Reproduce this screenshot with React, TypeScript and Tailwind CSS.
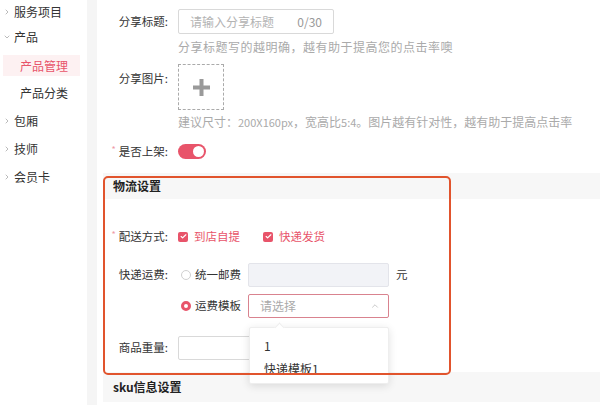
import { ChevronRight, ChevronDown, ChevronUp, Check } from "lucide-react"

const font = { fontFamily: '"Noto Sans CJK SC", "Noto Sans", sans-serif' }

type NavItem = { label: string; open?: boolean; h: string; children?: { label: string; active?: boolean }[] }

const nav: NavItem[] = [
  { label: "服务项目", h: "h-[24px]" },
  {
    label: "产品",
    open: true,
    h: "h-[26px]",
    children: [{ label: "产品管理", active: true }, { label: "产品分类" }],
  },
  { label: "包厢", h: "h-[28px]" },
  { label: "技师", h: "h-[28px]" },
  { label: "会员卡", h: "h-[28px]" },
]

// 左侧菜单
function Sidebar() {
  return (
    <aside className="w-[87px] shrink-0 bg-white">
      {nav.map((n) => (
        <div key={n.label}>
          <div className={`flex items-center ${n.h} text-[12px] text-[#333]`}>
            {n.open ? (
              <ChevronDown className="w-[8px] h-[8px] ml-[3px] mr-[3px] text-[#999]" strokeWidth={2} />
            ) : (
              <ChevronRight className="w-[8px] h-[8px] ml-[3px] mr-[3px] text-[#999]" strokeWidth={2} />
            )}
            {n.label}
          </div>
          {n.children && (
            <div className="mt-[5px] mb-[4px] flex flex-col gap-[6px]">
              {n.children.map((c) => (
                <div
                  key={c.label}
                  className={`flex items-center h-[21px] ml-[3px] mr-[7px] pl-[17px] text-[12px] ${
                    c.active ? "bg-[#fdf1f2] text-[#e8546a]" : "text-[#333]"
                  }`}
                >
                  {c.label}
                </div>
              ))}
            </div>
          )}
        </div>
      ))}
    </aside>
  )
}

function Label({ text, required }: { text: string; required?: boolean }) {
  return (
    <div className="w-[73px] shrink-0 text-right text-[11.5px] text-[#333] pr-[2px] whitespace-nowrap">
      {required && <span className="text-[#ee9aa6] text-[9px] mr-[3px] align-top">*</span>}
      {text}
    </div>
  )
}

function CheckBox({ label }: { label: string }) {
  return (
    <label className="flex items-center text-[11.5px] text-[#e8546a] mr-[15px]">
      <span className="w-[10px] h-[10px] rounded-[2px] bg-[#e8546a] flex items-center justify-center mr-[6px]">
        <Check className="w-[7px] h-[7px] text-white" strokeWidth={4} />
      </span>
      {label}
    </label>
  )
}

export default function App() {
  return (
    <div className="relative w-[600px] h-[405px] overflow-hidden flex bg-[#f5f5f5]" style={font}>
      <Sidebar />
      <div className="w-[10px] shrink-0 bg-[#f5f5f5]" />
      <main className="flex-1 bg-white">
        {/* 分享标题 */}
        <div className="flex items-center mt-[9px] gap-[8px]">
          <Label text="分享标题:" />
          <div className="w-[156px] h-[25px] border border-[#d9d9d9] rounded-[2px] flex items-center justify-between px-[11px] text-[12px] text-[#b3b3b3]">
            <span>请输入分享标题</span>
            <span className="text-[#999]">0/30</span>
          </div>
        </div>
        <p className="ml-[81px] mt-[5px] text-[12px] text-[#aaa] leading-[16px] tracking-[0.5px]">
          分享标题写的越明确，越有助于提高您的点击率噢
        </p>

        {/* 分享图片 */}
        <div className="flex items-start mt-[9px] gap-[8px]">
          <div className="pt-[6px]">
            <Label text="分享图片:" />
          </div>
          <div className="w-[46px] h-[46px] border border-dashed border-[#aaa] flex items-center justify-center">
            <svg width="17" height="17" viewBox="0 0 17 17">
              <rect x="6.5" y="0" width="4" height="17" fill="#9a9a9a" />
              <rect x="0" y="6.5" width="17" height="4" fill="#9a9a9a" />
            </svg>
          </div>
        </div>
        <p className="ml-[81px] mt-[4px] text-[12px] text-[#aaa] leading-[16px] whitespace-nowrap">
          建议尺寸：<span className="text-[11px]">200X160px</span>，宽高比<span className="text-[11px]">5:4</span>。图片越有针对性，越有助于提高点击率
        </p>

        {/* 是否上架 */}
        <div className="flex items-center mt-[13px] gap-[8px]">
          <Label text="是否上架:" required />
          <div className="w-[28px] h-[15px] rounded-full bg-[#e8546a] relative">
            <span className="absolute right-[2px] top-[2px] w-[11px] h-[11px] rounded-full bg-white" />
          </div>
        </div>

        {/* 物流设置 */}
        <div className="mt-[13px] ml-[6px] h-[26px] bg-[#f7f7f7] flex items-center pl-[10px] text-[12px] font-bold text-[#222]">
          物流设置
        </div>

        <div className="flex items-center mt-[29px] gap-[8px]">
          <Label text="配送方式:" required />
          <CheckBox label="到店自提" />
          <CheckBox label="快递发货" />
        </div>

        <div className="flex items-center mt-[17px] gap-[8px]">
          <Label text="快递运费:" />
          <div className="flex items-center text-[11.5px] text-[#333]">
            <span className="w-[10px] h-[10px] rounded-full border border-[#d0d0d0] ml-[3px] mr-[4px]" />
            统一邮费
            <div className="w-[141px] h-[24px] ml-[7px] bg-[#f2f3f7] border border-[#e3e4ea] rounded-[2px]" />
            <span className="ml-[7px]">元</span>
          </div>
        </div>

        <div className="flex items-center mt-[7px] gap-[8px]">
          <div className="w-[73px] shrink-0" />
          <div className="flex items-center text-[11.5px] text-[#333]">
            <span className="w-[10px] h-[10px] rounded-full border-[3px] border-[#e8546a] bg-white ml-[3px] mr-[4px]" />
            运费模板
            <div className="w-[141px] h-[24px] ml-[7px] border border-[#d9838f] rounded-[2px] flex items-center justify-between pl-[11px] pr-[8px] text-[12px] text-[#aaa]">
              请选择
              <ChevronUp className="w-[10px] h-[10px] text-[#aaa]" strokeWidth={1.5} />
            </div>
          </div>
        </div>

        <div className="flex items-center mt-[18px] gap-[8px]">
          <Label text="商品重量:" />
          <div className="w-[156px] h-[24px] border border-[#d9d9d9] rounded-[2px]" />
        </div>

        {/* sku信息设置 */}
        <div className="mt-[12px] ml-[6px] h-[30px] bg-[#f7f7f7] flex items-center pl-[10px] text-[12px] font-bold text-[#222]">
          sku信息设置
        </div>
      </main>

      {/* 下拉菜单 */}
      <div className="absolute left-[249px] top-[327px] w-[140px] h-[57px] bg-white shadow-[0_2px_8px_rgba(0,0,0,0.12)] border border-[#eee] rounded-[2px] text-[12px] text-[#333]">
        <span className="absolute -top-[4px] left-[26px] w-[7px] h-[7px] bg-white rotate-45 border-l border-t border-[#eee]" />
        <div className="pl-[14px] pt-[9px] h-[24px]">1</div>
        <div className="pl-[14px] pt-[8px]">快递模板1</div>
      </div>

      {/* 标注框 */}
      <div className="absolute left-[103px] top-[176px] w-[348px] h-[199px] border-2 border-[#e1542d] rounded-[5px] pointer-events-none" />
    </div>
  )
}
